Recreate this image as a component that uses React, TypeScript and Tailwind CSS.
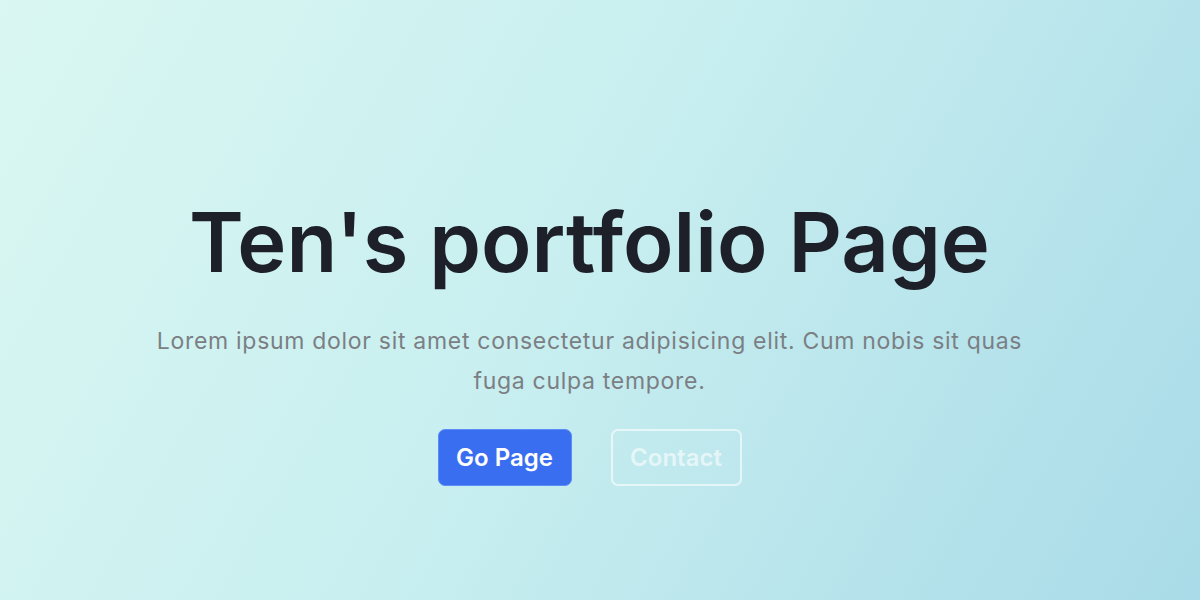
import React from 'react';

export default function App() {
  return (
    <div className="min-h-[600px] w-full bg-[linear-gradient(120deg,#daf7f2_0%,#c9eff0_45%,#a9dbe8_100%)] font-['Inter','Liberation_Sans',sans-serif]">
      <section className="flex flex-col items-center pt-[201px] pr-[21px] text-center">
        <h1 className="text-[83px] font-semibold leading-none text-[#1e2029]">
          Ten's portfolio Page
        </h1>
        <p className="mt-[37px] max-w-[890px] text-[23px] leading-[40px] tracking-[0.7px] text-[#7b7f84]">
          Lorem ipsum dolor sit amet consectetur adipisicing elit. Cum nobis sit quas fuga culpa tempore.
        </p>
        <div className="mt-[28px] flex gap-[39px]">
          <button className="h-[57px] w-[134px] rounded-[7px] border border-[#5c8cf6] bg-[#3a6ef0] text-[24px] font-semibold text-white">
            Go Page
          </button>
          <button className="h-[57px] w-[131px] rounded-[7px] border-2 border-white/60 text-[24px] font-semibold text-white/60">
            Contact
          </button>
        </div>
      </section>
    </div>
  );
}
